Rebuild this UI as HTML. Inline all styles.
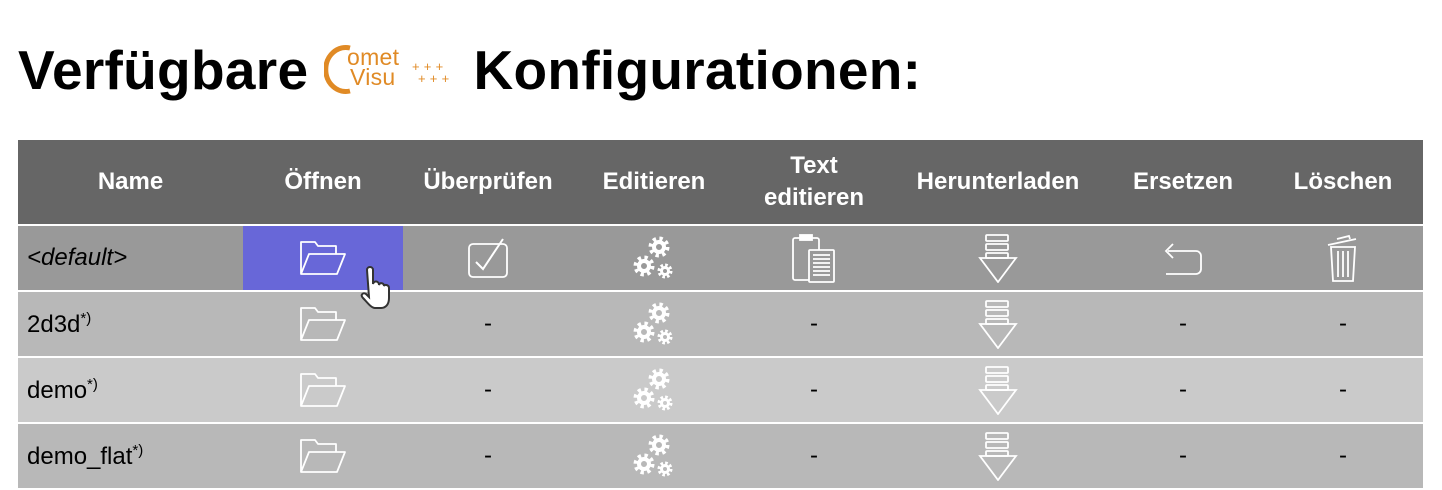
<!DOCTYPE html>
<html><head><meta charset="utf-8"><style>
body{margin:0;width:1442px;height:470px;overflow:hidden;background:#fff;font-family:"Liberation Sans",Arial,sans-serif;position:relative}
h1{position:absolute;left:18px;top:38px;margin:0;font-size:55px;font-weight:bold;line-height:64px;white-space:nowrap;letter-spacing:0.3px}
.logo{display:inline-block;width:134px;height:56px;vertical-align:-6px;position:relative}
.logo text{font-weight:normal}
table{position:absolute;left:18px;top:140px;border-collapse:collapse;table-layout:fixed;width:1405px}
td,th{padding:0;text-align:center;font-size:24px}
th{background:#666;color:#fff;height:84px;font-weight:bold;line-height:32px;border-bottom:2px solid #fff}
tr.r td{height:64px;border-bottom:2px solid #fff}
td.n{text-align:left;padding-left:9px}
sup{font-size:15px}
svg{display:block;margin:auto}
</style></head><body>
<h1>Verfügbare <span class="logo"><svg width="134" height="56" viewBox="0 0 134 56" style="position:absolute;left:0;top:0"><path d="M26 9 A20 22 0 1 0 26 52" fill="none" stroke="#e08a25" stroke-width="5"/><text x="23" y="26" font-family="Liberation Sans" font-size="23" fill="#e08a25">omet</text><text x="26" y="46" font-family="Liberation Sans" font-size="23" fill="#e08a25">Visu</text><text x="88" y="32" font-size="13" fill="#e08a25">+ + +</text><text x="94" y="44" font-size="13" fill="#e08a25">+ + +</text></svg></span> Konfigurationen:</h1>
<table>
<colgroup><col style="width:225px"><col style="width:160px"><col style="width:170px"><col style="width:162px"><col style="width:158px"><col style="width:210px"><col style="width:160px"><col style="width:160px"></colgroup>
<tr><th>Name</th><th>Öffnen</th><th>Überprüfen</th><th>Editieren</th><th>Text<br>editieren</th><th>Herunterladen</th><th>Ersetzen</th><th>Löschen</th></tr>
<tr class="r" style="background:#999"><td class="n"><i>&lt;default&gt;</i></td><td style="background:#6867d8;position:relative"><svg width="50" height="40" viewBox="0 0 50 40"><path d="M3 36V4h14l3 4h18v8M3 36l8-20h36l-8 20z" fill="none" stroke="#fff" stroke-width="1.8" stroke-linejoin="round"/></svg><svg width="40" height="50" viewBox="0 0 40 50" style="position:absolute;left:112px;top:38px"><path d="M12 6c0-4 6-4 6 0v14c1-4 6-3 6 1 1-3 5-2 5 1 1-2 5-1 5 2v10c0 6-3 10-8 10h-6c-4 0-8-6-12-10-3-3 0-6 3-4l3 3z" fill="#fff" stroke="#333" stroke-width="2"/></svg></td>
<td><svg width="44" height="44" viewBox="0 0 44 44"><rect x="3" y="8" width="38" height="33" rx="4" fill="none" stroke="#fff" stroke-width="1.8"/><path d="M10 26l7 7 20-30" fill="none" stroke="#fff" stroke-width="2"/></svg></td>
<td><svg width="44" height="48" viewBox="0 0 44 48"><g fill="none" stroke="#fff"><circle cx="27" cy="13" r="5" stroke-width="4"/><circle cx="27" cy="13" r="8.5" stroke-width="4" stroke-dasharray="3.3 3.4"/><circle cx="12" cy="32" r="5" stroke-width="4"/><circle cx="12" cy="32" r="8.5" stroke-width="4" stroke-dasharray="3.3 3.4"/><circle cx="33" cy="37" r="3.5" stroke-width="3"/><circle cx="33" cy="37" r="6" stroke-width="3" stroke-dasharray="2.6 2.1"/></g></svg></td>
<td><svg width="48" height="50" viewBox="0 0 48 50"><g fill="none" stroke="#fff" stroke-width="1.8"><rect x="3" y="5" width="26" height="42" rx="2"/><rect x="10" y="2" width="12" height="5" fill="#fff"/><rect x="19" y="17" width="25" height="32" rx="1" fill="#999"/><path d="M23 22h17M23 26h17M23 30h17M23 34h17M23 38h17M23 42h17"/></g></svg></td>
<td><svg width="40" height="50" viewBox="0 0 40 50"><g fill="none" stroke="#fff" stroke-width="1.8"><rect x="8" y="2" width="22" height="6" rx="1"/><rect x="8" y="11" width="22" height="6" rx="1"/><rect x="8" y="20" width="22" height="5" rx="1"/><path d="M2 25h36L20 49z"/></g></svg></td>
<td><svg width="44" height="44" viewBox="0 0 44 44"><path d="M12 8l-7 7 7 7M7 15h28a5 5 0 0 1 5 5v13a5 5 0 0 1-5 5H5" fill="none" stroke="#fff" stroke-width="1.8"/></svg></td>
<td><svg width="40" height="50" viewBox="0 0 40 50"><g fill="none" stroke="#fff" stroke-width="1.8"><path d="M5 12l28-6M14 6l12-3 1 3M8 14h24l-2 34H10z"/><path d="M15 18v26M20 18v26M25 18v26"/></g></svg></td></tr>
<tr class="r" style="background:#b8b8b8"><td class="n">2d3d<sup>*)</sup></td><td><svg width="50" height="40" viewBox="0 0 50 40"><path d="M3 36V4h14l3 4h18v8M3 36l8-20h36l-8 20z" fill="none" stroke="#fff" stroke-width="1.8" stroke-linejoin="round"/></svg></td><td>-</td><td><svg width="44" height="48" viewBox="0 0 44 48"><g fill="none" stroke="#fff"><circle cx="27" cy="13" r="5" stroke-width="4"/><circle cx="27" cy="13" r="8.5" stroke-width="4" stroke-dasharray="3.3 3.4"/><circle cx="12" cy="32" r="5" stroke-width="4"/><circle cx="12" cy="32" r="8.5" stroke-width="4" stroke-dasharray="3.3 3.4"/><circle cx="33" cy="37" r="3.5" stroke-width="3"/><circle cx="33" cy="37" r="6" stroke-width="3" stroke-dasharray="2.6 2.1"/></g></svg></td><td>-</td><td><svg width="40" height="50" viewBox="0 0 40 50"><g fill="none" stroke="#fff" stroke-width="1.8"><rect x="8" y="2" width="22" height="6" rx="1"/><rect x="8" y="11" width="22" height="6" rx="1"/><rect x="8" y="20" width="22" height="5" rx="1"/><path d="M2 25h36L20 49z"/></g></svg></td><td>-</td><td>-</td></tr>
<tr class="r" style="background:#cacaca"><td class="n">demo<sup>*)</sup></td><td><svg width="50" height="40" viewBox="0 0 50 40"><path d="M3 36V4h14l3 4h18v8M3 36l8-20h36l-8 20z" fill="none" stroke="#fff" stroke-width="1.8" stroke-linejoin="round"/></svg></td><td>-</td><td><svg width="44" height="48" viewBox="0 0 44 48"><g fill="none" stroke="#fff"><circle cx="27" cy="13" r="5" stroke-width="4"/><circle cx="27" cy="13" r="8.5" stroke-width="4" stroke-dasharray="3.3 3.4"/><circle cx="12" cy="32" r="5" stroke-width="4"/><circle cx="12" cy="32" r="8.5" stroke-width="4" stroke-dasharray="3.3 3.4"/><circle cx="33" cy="37" r="3.5" stroke-width="3"/><circle cx="33" cy="37" r="6" stroke-width="3" stroke-dasharray="2.6 2.1"/></g></svg></td><td>-</td><td><svg width="40" height="50" viewBox="0 0 40 50"><g fill="none" stroke="#fff" stroke-width="1.8"><rect x="8" y="2" width="22" height="6" rx="1"/><rect x="8" y="11" width="22" height="6" rx="1"/><rect x="8" y="20" width="22" height="5" rx="1"/><path d="M2 25h36L20 49z"/></g></svg></td><td>-</td><td>-</td></tr>
<tr class="r" style="background:#b8b8b8"><td class="n">demo_flat<sup>*)</sup></td><td><svg width="50" height="40" viewBox="0 0 50 40"><path d="M3 36V4h14l3 4h18v8M3 36l8-20h36l-8 20z" fill="none" stroke="#fff" stroke-width="1.8" stroke-linejoin="round"/></svg></td><td>-</td><td><svg width="44" height="48" viewBox="0 0 44 48"><g fill="none" stroke="#fff"><circle cx="27" cy="13" r="5" stroke-width="4"/><circle cx="27" cy="13" r="8.5" stroke-width="4" stroke-dasharray="3.3 3.4"/><circle cx="12" cy="32" r="5" stroke-width="4"/><circle cx="12" cy="32" r="8.5" stroke-width="4" stroke-dasharray="3.3 3.4"/><circle cx="33" cy="37" r="3.5" stroke-width="3"/><circle cx="33" cy="37" r="6" stroke-width="3" stroke-dasharray="2.6 2.1"/></g></svg></td><td>-</td><td><svg width="40" height="50" viewBox="0 0 40 50"><g fill="none" stroke="#fff" stroke-width="1.8"><rect x="8" y="2" width="22" height="6" rx="1"/><rect x="8" y="11" width="22" height="6" rx="1"/><rect x="8" y="20" width="22" height="5" rx="1"/><path d="M2 25h36L20 49z"/></g></svg></td><td>-</td><td>-</td></tr>
</table>
</body></html>
